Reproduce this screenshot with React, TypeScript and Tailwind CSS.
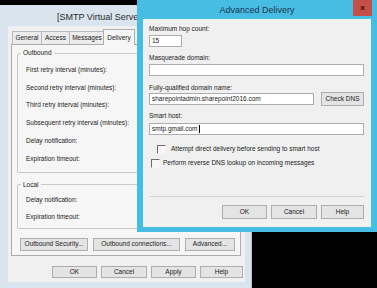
import React from 'react';

const Btn: React.FC<{ label: string; w: string; h?: string }> = ({ label, w, h = 'h-[12px]' }) => (
  <div
    className={`${w} ${h} flex items-center justify-center border border-[#adadad] bg-[#e4e4e4] text-[6.5px] leading-[8px] text-[#1a1a1a]`}
  >
    {label}
  </div>
);

const Field: React.FC<{ value?: string; w?: string; cursor?: boolean }> = ({ value, w = 'w-full', cursor }) => (
  <div className={`${w} h-[12px] flex items-center border border-[#abadb3] bg-white px-[2px] text-[6.5px] leading-[8px] text-[#1a1a1a] whitespace-nowrap`}>
    {value}
    {cursor && <span className="ml-px h-[8px] w-px bg-black" />}
  </div>
);

const Check: React.FC = () => (
  <div className="w-[9px] h-[9px] border-t border-l border-t-[#6d6d6d] border-l-[#6d6d6d] border-r border-b border-r-[#f4f4f4] border-b-[#f4f4f4] bg-[#f7f7f7]" />
);

const Row: React.FC<{ label: string; h: string }> = ({ label, h }) => (
  <div className={`${h} flex items-center pl-[8px] text-[6.5px] leading-[8px] text-[#1a1a1a] whitespace-nowrap`}>
    {label}
  </div>
);

const tabs = [
  { label: 'General', w: 'w-[29px]' },
  { label: 'Access', w: 'w-[28px]' },
  { label: 'Messages', w: 'w-[35px]' },
];

export default function App() {
  return (
    <div className="relative w-[377px] h-[288px] overflow-hidden bg-black font-['Liberation_Sans',Arial,sans-serif]">
      {/* back window */}
      <div className="absolute left-0 top-[5px] w-[252px] h-[290px] flex flex-col bg-[#d9e4ee] border-r border-[#b8c6d3]">
        <div className="h-[21px] pt-[7px] pl-[57px] text-[9px] leading-[10px] text-[#2a2a2a] whitespace-nowrap">
          [SMTP Virtual Server #1] Properties
        </div>
        <div className="ml-[8px] w-[237px] h-[256px] bg-[#f0f0f0] flex flex-col">
          <div className="h-[18px] pt-[2px] pl-[4px] flex items-end">
            {tabs.map((t) => (
              <div
                key={t.label}
                className={`${t.w} h-[13px] flex items-center justify-center border-t border-l border-[#b9b9b9] bg-[#ececec] text-[6.5px] leading-[8px] text-[#1a1a1a]`}
              >
                {t.label}
              </div>
            ))}
            <div className="w-[32px] h-[16px] -mb-px flex items-center justify-center border-t border-l border-r border-[#adadad] bg-[#f6f6f6] text-[6.5px] leading-[8px] text-[#1a1a1a] z-10 -ml-px">
              Delivery
            </div>
          </div>
          <div className="ml-[3px] w-[230px] h-[212px] border border-[#adadad] bg-[#f6f6f6] flex flex-col">
            <fieldset className="mt-[4px] mx-[5px] pb-[4px] border border-[#c9c9c9] rounded-[2px]">
              <legend className="ml-[3px] px-[2px] text-[6.5px] leading-[8px] text-[#1a1a1a]">Outbound</legend>
              <div className="pt-[4px] flex flex-col">
                <Row h="h-[17.8px]" label="First retry interval (minutes):" />
                <Row h="h-[17.8px]" label="Second retry interval (minutes):" />
                <Row h="h-[17.8px]" label="Third retry interval (minutes):" />
                <Row h="h-[17.8px]" label="Subsequent retry interval (minutes):" />
                <Row h="h-[17.8px]" label="Delay notification:" />
                <Row h="h-[17.8px]" label="Expiration timeout:" />
              </div>
            </fieldset>
            <fieldset className="mt-[8px] mx-[5px] pb-[3px] border border-[#c9c9c9] rounded-[2px]">
              <legend className="ml-[3px] px-[2px] text-[6.5px] leading-[8px] text-[#1a1a1a]">Local</legend>
              <div className="pt-[3px] flex flex-col">
                <Row h="h-[16.5px]" label="Delay notification:" />
                <Row h="h-[16.5px]" label="Expiration timeout:" />
              </div>
            </fieldset>
            <div className="mt-[9px] ml-[8px] flex gap-[5px]">
              <Btn label="Outbound Security..." w="w-[68px]" h="h-[13px]" />
              <Btn label="Outbound connections..." w="w-[87px]" h="h-[13px]" />
              <Btn label="Advanced..." w="w-[50px]" h="h-[13px]" />
            </div>
          </div>
          <div className="mt-[10px] pr-[2px] flex justify-end gap-[4px]">
            <Btn label="OK" w="w-[45px]" />
            <Btn label="Cancel" w="w-[46px]" />
            <Btn label="Apply" w="w-[45px]" />
            <Btn label="Help" w="w-[43px]" />
          </div>
        </div>
      </div>

      {/* front window */}
      <div className="absolute left-[137px] top-0 w-[240px] h-[232px] flex flex-col bg-[#48bde4]">
        <div className="relative h-[19px] flex items-center justify-center text-[9px] leading-[10px] text-[#1b3550]">
          Advanced Delivery
          <div className="absolute right-[5px] top-0 w-[19px] h-[16px] flex items-center justify-center bg-[#c34f46] text-[8px] font-bold leading-[8px] text-[#2a0e0c]">
            x
          </div>
        </div>
        <div className="mx-[6px] h-[208px] bg-[#f0f0f0] border border-[#e9f4f9] flex flex-col pl-[5px] pr-[6px] text-[6.5px] leading-[8px] text-[#1a1a1a]">
          <div className="mt-[5px]">Maximum hop count:</div>
          <div className="mt-[2px]">
            <Field value="15" w="w-[33px]" />
          </div>
          <div className="mt-[7px]">Masquerade domain:</div>
          <div className="mt-[2px]">
            <Field />
          </div>
          <div className="mt-[8px]">Fully-qualified domain name:</div>
          <div className="h-[14px] flex items-center justify-between">
            <Field value="sharepointadmin.sharepoint2016.com" w="w-[165px]" />
            <Btn label="Check DNS" w="w-[43px]" h="h-[14px]" />
          </div>
          <div className="mt-[6px]">Smart host:</div>
          <div className="mt-[3px]">
            <Field value="smtp.gmail.com" cursor />
          </div>
          <div className="mt-[9px] h-[10px] pl-[8px] flex items-center gap-[5px] whitespace-nowrap">
            <Check />
            <span>Attempt direct delivery before sending to smart host</span>
          </div>
          <div className="mt-[4px] h-[10px] pl-[2px] flex items-center gap-[3px] whitespace-nowrap">
            <Check />
            <span>Perform reverse DNS lookup on incoming messages</span>
          </div>
          <div className="mt-[28px] h-px bg-[#d5d5d5]" />
          <div className="mt-[8px] flex justify-end gap-[4px]">
            <Btn label="OK" w="w-[45px]" h="h-[14px]" />
            <Btn label="Cancel" w="w-[46px]" h="h-[14px]" />
            <Btn label="Help" w="w-[43px]" h="h-[14px]" />
          </div>
        </div>
      </div>
    </div>
  );
}
